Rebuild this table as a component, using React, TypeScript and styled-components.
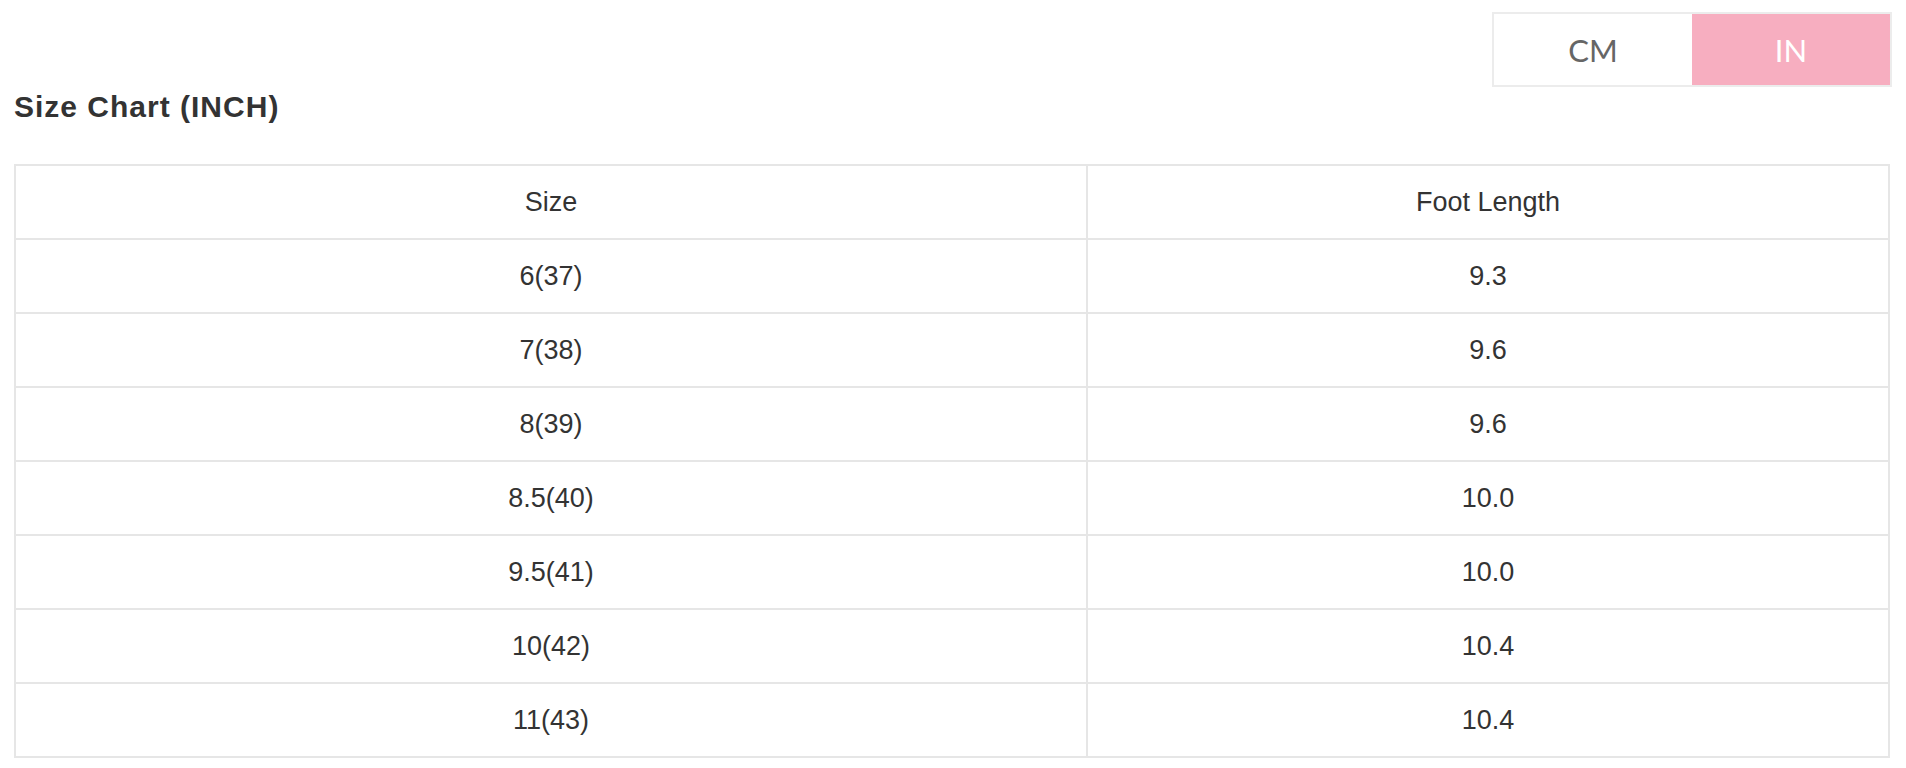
import React, { useState } from 'react'
import styled, { createGlobalStyle } from 'styled-components'

const GlobalStyle = createGlobalStyle`
    html, body {
        margin: 0;
        padding: 0;
        background: #ffffff;
    }
    * {
        box-sizing: border-box;
    }
`

const rows = [
    { size: '6(37)', foot: '9.3' },
    { size: '7(38)', foot: '9.6' },
    { size: '8(39)', foot: '9.6' },
    { size: '8.5(40)', foot: '10.0' },
    { size: '9.5(41)', foot: '10.0' },
    { size: '10(42)', foot: '10.4' },
    { size: '11(43)', foot: '10.4' },
]

const App = () => {
    const [unit, setUnit] = useState<'CM' | 'IN'>('IN')

    return (
        <Page>
            <GlobalStyle />
            <ToggleRow>
                <UnitToggle>
                    <UnitButton active={unit === 'CM'} onClick={() => setUnit('CM')}>CM</UnitButton>
                    <UnitButton active={unit === 'IN'} onClick={() => setUnit('IN')}>IN</UnitButton>
                </UnitToggle>
            </ToggleRow>
            <Title>Size Chart ({unit === 'IN' ? 'INCH' : 'CM'})</Title>
            <ChartTable>
                <colgroup>
                    <col style={{ width: '57.2%' }} />
                    <col />
                </colgroup>
                <thead>
                    <tr>
                        <Cell as="th">Size</Cell>
                        <Cell as="th">Foot Length</Cell>
                    </tr>
                </thead>
                <tbody>
                    {rows.map((r) => (
                        <tr key={r.size}>
                            <Cell>{r.size}</Cell>
                            <Cell>{unit === 'IN' ? r.foot : (parseFloat(r.foot) * 2.54).toFixed(1)}</Cell>
                        </tr>
                    ))}
                </tbody>
            </ChartTable>
        </Page>
    )
}

export default App

const Page = styled.div`
    width: 1906px;
    padding: 12px 14px 0 14px;
    display: flex;
    flex-direction: column;
`

const ToggleRow = styled.div`
    display: flex;
    justify-content: flex-end;
`

const UnitToggle = styled.div`
    display: flex;
    width: 400px;
    height: 75px;
    border: 2px solid #ececec;
`

const UnitButton = styled.button<{ active: boolean }>`
    flex: 1;
    border: none;
    outline: none;
    margin: 0;
    padding: 0;
    cursor: pointer;
    font-family: Lato, "Open Sans", sans-serif;
    font-size: 31px;
    font-weight: 400;
    background: ${({ active }) => (active ? '#f7aec0' : '#ffffff')};
    color: ${({ active }) => (active ? '#ffffff' : '#666666')};
`

const Title = styled.h2`
    margin: 3px 0 40px 0;
    font-family: "Liberation Sans", Arial, sans-serif;
    font-size: 30px;
    line-height: 34px;
    font-weight: 700;
    letter-spacing: 1px;
    color: #333333;
`

const ChartTable = styled.table`
    width: 1876px;
    table-layout: fixed;
    border-collapse: separate;
    border-spacing: 0;
    border-top: 2px solid #e6e6e6;
    border-left: 2px solid #e6e6e6;
`

const Cell = styled.td`
    height: 74px;
    padding: 0;
    text-align: center;
    vertical-align: middle;
    border-right: 2px solid #e6e6e6;
    border-bottom: 2px solid #e6e6e6;
    font-family: "Liberation Sans", Arial, sans-serif;
    font-size: 27px;
    font-weight: 400;
    color: #333333;
`
